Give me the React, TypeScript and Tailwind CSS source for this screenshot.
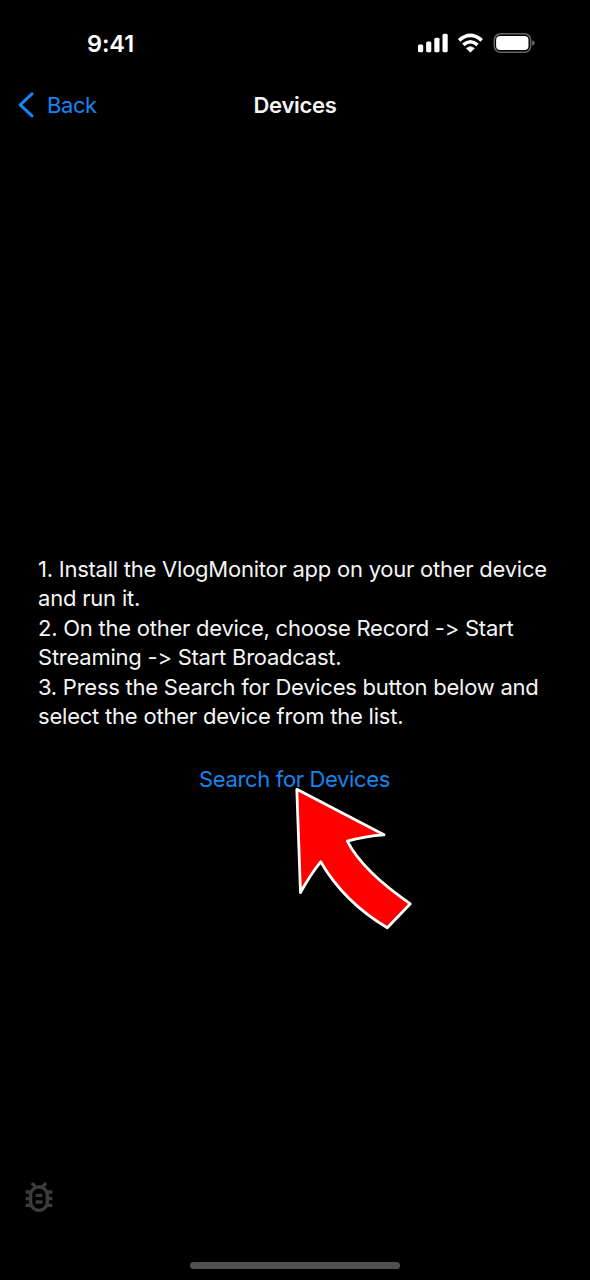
import React from "react";
import { MdOutlineBugReport } from "react-icons/md";

function StatusIcons() {
  return (
    <svg className="block" width="120" height="24" viewBox="416 31 120 24" fill="none" aria-hidden="true">
      <g fill="#fff">
        <rect x="418" y="44.5" width="5.2" height="7.8" rx="1.5" />
        <rect x="426.1" y="41.6" width="5.2" height="10.7" rx="1.5" />
        <rect x="434.3" y="37.7" width="5.2" height="14.6" rx="1.5" />
        <rect x="442.5" y="33.7" width="5.2" height="18.6" rx="1.5" />
        <path d="M470.4 52.3 L466.4 48.3 Q470.4 45 474.4 48.3 Z" stroke="#fff" strokeWidth="0.6" strokeLinejoin="round" />
      </g>
      <path d="M459.1 40.4 Q470.4 30.4 481.7 40.4" stroke="#fff" strokeWidth="3.7" />
      <path d="M463.3 44.9 Q470.4 38.6 477.5 44.9" stroke="#fff" strokeWidth="3.5" />
      <rect x="494.3" y="33.8" width="36.4" height="18.5" rx="6.2" stroke="#656565" strokeWidth="1.5" />
      <rect x="496.1" y="36" width="32.4" height="14.1" rx="4" fill="#fff" />
      <path d="M532.3 40.3 Q534.8 41.2 534.8 43 T532.3 45.8 Z" fill="#707070" />
    </svg>
  );
}

function PointerArrow() {
  return (
    <svg className="pointer-events-none absolute left-[92px] top-[21px]" width="126" height="150" viewBox="291 785 126 150" fill="none" aria-hidden="true">
      <path
        d="M296.8 789.3 L384 834.8 Q365 836 347.3 841.2 C358 862 380 883 410.3 903.8 L387.3 927.8 C359 911 337 890 320.7 861.8 Q310 875 300.5 892.5 Z"
        fill="#fe0000"
        stroke="#fff"
        strokeWidth="2.8"
        strokeLinejoin="round"
      />
    </svg>
  );
}

export default function App() {
  return (
    <main className="flex h-[1280px] w-[590px] flex-col overflow-hidden bg-black font-['Inter','Liberation_Sans',sans-serif] text-[#f5f5f5] [font-feature-settings:'calt'_0]">
      <header className="flex h-[86px] shrink-0 items-center justify-between pl-[87px] pr-[54px]">
        <time className="pt-[2px] text-[23.5px] font-semibold tracking-[-0.1px] text-white">9:41</time>
        <StatusIcons />
      </header>
      <nav className="grid h-[38px] shrink-0 grid-cols-3 items-center">
        <button className="flex items-center gap-[13px] pl-[17px] text-[22px] text-[#1685f5]">
          <svg width="17" height="28" viewBox="17 91 17 28" fill="none" aria-hidden="true">
            <path d="M32 93.8 L20.2 104.8 L32 115.8" stroke="currentColor" strokeWidth="3" strokeLinecap="round" strokeLinejoin="round" />
          </svg>
          <span className="tracking-[-0.4px]">Back</span>
        </button>
        <h1 className="text-center text-[22px] font-semibold tracking-[-0.3px]">Devices</h1>
      </nav>
      <section className="flex flex-1 flex-col pl-[38px] pt-[431px]">
        <div className="whitespace-nowrap text-[22px] leading-[29.4px]">
          <p className="tracking-[-0.24px]">1. Install the VlogMonitor app on your other device</p>
          <p className="tracking-[-0.2px]">and run it.</p>
          <p className="tracking-[-0.24px]">2. On the other device, choose Record -&gt; Start</p>
          <p className="tracking-[-0.24px]">Streaming -&gt; Start Broadcast.</p>
          <p className="tracking-[-0.25px]">3. Press the Search for Devices button below and</p>
          <p className="tracking-[-0.21px]">select the other device from the list.</p>
        </div>
        <div className="relative ml-[161px] mt-[33px] w-[192px]">
          <button className="whitespace-nowrap text-[22px] leading-[30px] tracking-[-0.35px] text-[#1685ed]">Search for Devices</button>
          <PointerArrow />
        </div>
      </section>
      <footer className="flex h-[103px] shrink-0 flex-col justify-between pb-[11px]">
        <div className="pl-[19px]">
          <MdOutlineBugReport className="block size-[40px] text-[#3c3c3c]" />
        </div>
        <div className="ml-[190px] h-[7px] w-[210px] rounded-full bg-[#505050]" />
      </footer>
    </main>
  );
}
